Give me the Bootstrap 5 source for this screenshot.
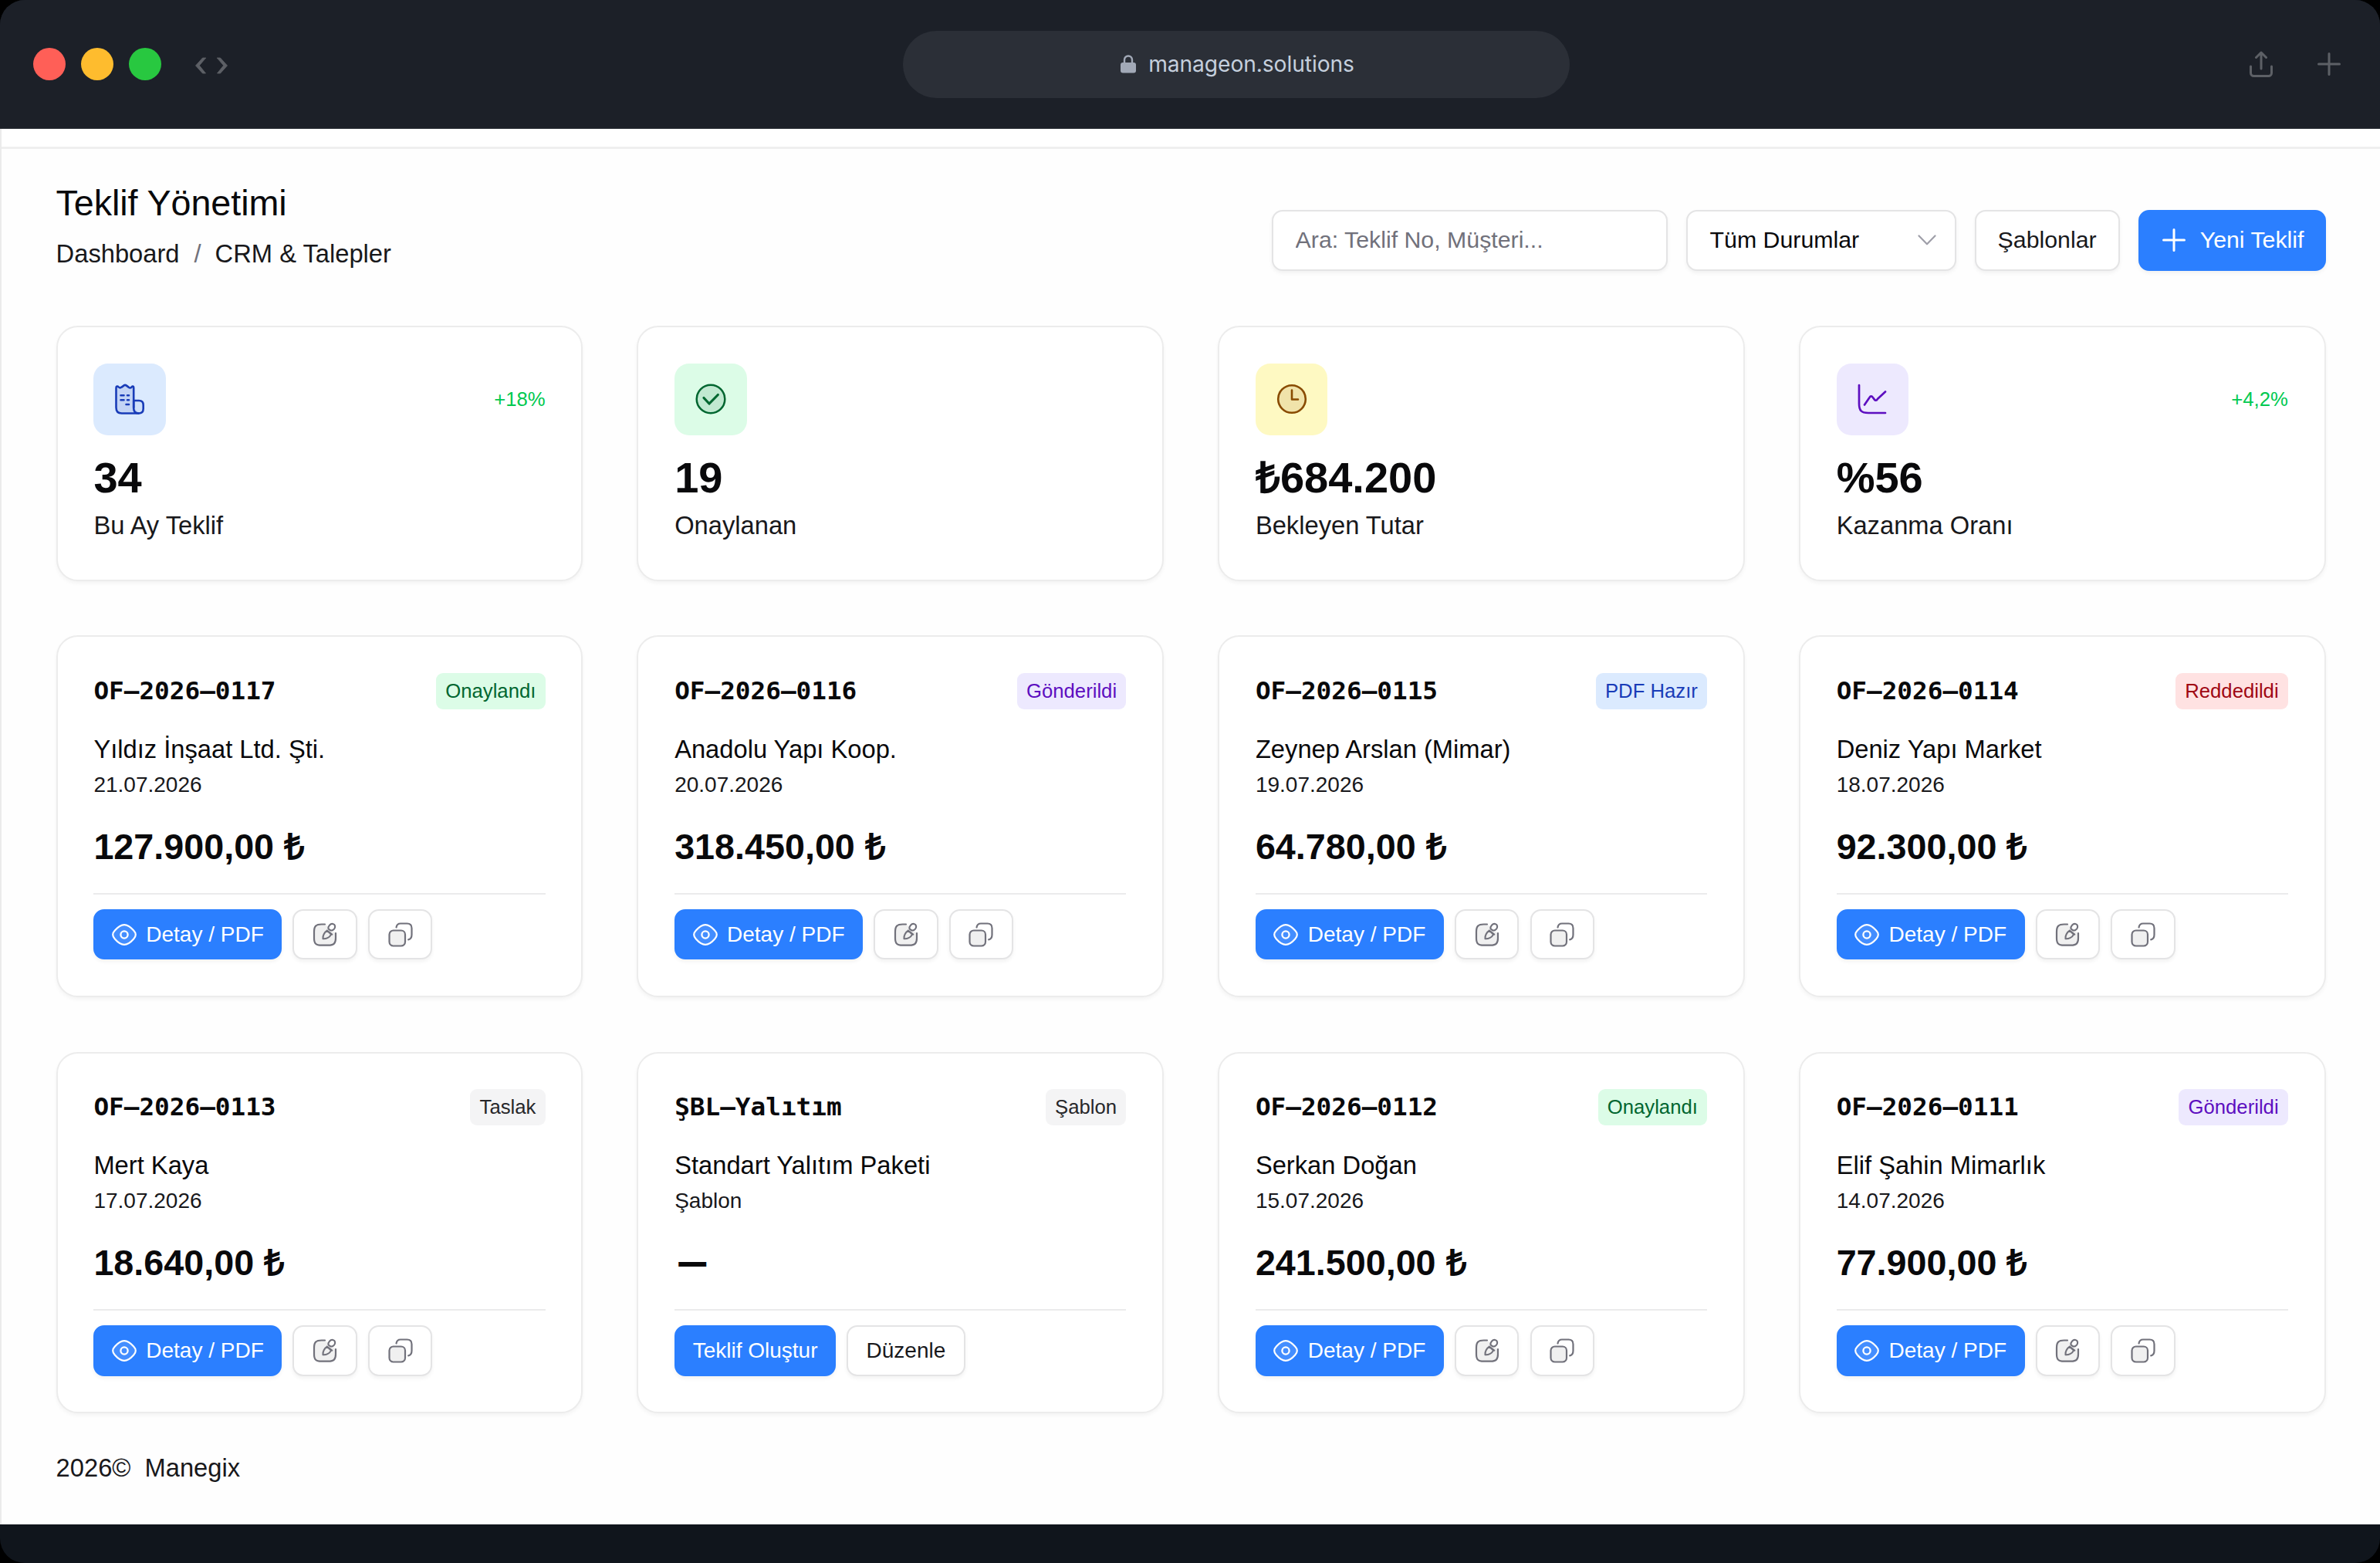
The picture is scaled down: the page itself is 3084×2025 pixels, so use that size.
<!DOCTYPE html>
<html lang="tr">
<head>
<meta charset="utf-8">
<title>Teklif Yönetimi</title>
<link href="https://cdn.jsdelivr.net/npm/bootstrap@5.3.0/dist/css/bootstrap.min.css" rel="stylesheet">
<style>
html{background:#000}
body{background:#000;font-family:"Liberation Sans",Arial,sans-serif;color:#18181b;font-size:32.7px;line-height:46px;margin:0;-webkit-font-smoothing:antialiased}
svg{fill:none;stroke:currentColor;stroke-linecap:round;stroke-linejoin:round;flex:none;display:block}
.window{height:2025px;border-radius:32px;overflow:hidden;background:#10151c}
.chrome{height:167px;background:#1c2028;border-bottom:1px solid #30343b;padding:0 51px 0 43px;color:#5d6066}
.side{width:1127px}
.dot{width:42px;height:42px;border-radius:50%}
.addr{width:864px;height:87px;border-radius:44px;background:#2b2f37;color:#c5cfdd;font:28.2px/40px Inter,sans-serif;letter-spacing:-.08px;padding-left:3px}
.page{height:1808px;background:#fefefe;border-left:2px solid #ebebeb}
.strip{height:26px;background:#fff;border-bottom:3px solid #efefef}
.content{padding:42px 70.4px 0 70.6px}
.title{font-size:46.7px;line-height:56px;color:#09090b;margin:0 0 15px;font-weight:400;letter-spacing:-.08px}
.crumb{--bs-breadcrumb-divider-color:#71717b;margin:0;font-size:32.7px}
.crumb .breadcrumb-item+.breadcrumb-item{padding-left:19px}
.crumb .breadcrumb-item+.breadcrumb-item::before{padding-right:18px}
.tools{gap:24px;margin-bottom:1px}
.ctl{height:79px;border:2.4px solid #e4e4e5;border-radius:14px;background:#fff;font-size:30.3px;line-height:40px;color:#09090b;box-shadow:0 3px 5px rgba(0,0,0,.05);padding:0 29px 1px;white-space:nowrap}
.ctl::placeholder{color:#71717b;opacity:1}
.ctl.search{width:513px}
.ctl.pick{width:350px;padding-right:24px}
.ctl.tpl{width:188px;padding:0 0 1px;color:#18181b}
.ctl.new{width:243px;background:#2b7fff;border-color:#2b7fff;color:#fff;padding:0 0 1px 3px}
.tiles{--bs-gutter-x:70px;--bs-gutter-y:70.5px;margin-top:-70.5px}
.tile{border:2.4px solid #ececec;border-radius:28px;box-shadow:0 3px 5px rgba(0,0,0,.045);background:#fff;padding:46.8px}
.ico{width:93.4px;height:93.4px;border-radius:19px}
.c-blue{background:#dbeafe;color:#193cb8}
.c-green{background:#dcfce7;color:#016630}
.c-yellow{background:#fef9c2;color:#894b00}
.c-violet{background:#ede9fe;color:#5d0ec0}
.c-red{background:#ffe2e2;color:#9f0712}
.c-gray{background:#f4f4f5;color:#27272a}
.delta{font-size:25.7px;color:#00c950;line-height:36px}
.value{font-size:56px;line-height:60px;font-weight:700;color:#09090b;margin:25.5px 0 8.6px}
.code{font:700 32.7px/46.7px "DejaVu Sans Mono",monospace;color:#09090b}
.dash{display:inline-block;transform:translateY(-2px) scale(.77,1.25)}
.tag{height:46.7px;line-height:46.7px;padding:0 12.2px;border-radius:9px;font-size:25.7px}
.who{margin-top:28.9px;color:#09090b}
.when{font-size:28px;line-height:40px;margin-top:3px}
.sum{font-size:46.7px;line-height:56px;font-weight:700;color:#09090b;margin-top:32px}
.acts{margin-top:32.2px;border-top:2.4px solid #ebebec;padding-top:19px;gap:14.2px}
.act{height:65.4px;border:2.4px solid #e4e4e5;border-radius:14px;background:#fff;color:#18181b;box-shadow:0 3px 5px rgba(0,0,0,.05);font-size:28px;line-height:40px;padding:0 21.5px}
.act svg+span{margin-left:12.4px}
.act.txt{padding:0 23.4px}
.act.go{background:#2b7fff;border-color:#2b7fff;color:#fff}
.act.sq{width:83.4px;padding:0;color:#71717b}
.foot{margin-top:48px;word-spacing:9px}
</style>
<script src="https://cdn.jsdelivr.net/npm/bootstrap@5.3.0/dist/js/bootstrap.bundle.min.js"></script>
</head>
<body>
<svg width="0" height="0" class="position-absolute">
<symbol id="eye" viewBox="0 0 32 32"><path d="M1.200 16c0-2.200.9-3.600 2.600-5.400C6.800 7.200 10.600 3.200 16 3.200s9.200 4 12.200 7.400c1.700 1.800 2.600 3.200 2.600 5.400s-.9 3.600-2.600 5.400c-3 3.400-6.800 7.400-12.200 7.400s-9.200-4-12.200-7.400C2.100 19.600 1.200 18.200 1.200 16z" fill="#fff" fill-opacity=".12" stroke-width="2.200"/><circle cx="16" cy="16" r="4.600" stroke-width="2.300"/></symbol>
<symbol id="edit" viewBox="0 0 32 32"><path d="M16 2.500h-4.500C4.500 2.500 2 5 2 12v8.500c0 7 2.500 9.200 9.500 9.200h9c7 0 9.500-2.500 9.500-9.200V14" fill="#000" fill-opacity=".06" stroke-width="2.200"/><path d="M18.800 10.700c-3.200 2-6 6.800-5.300 10.500 3.800.5 8.600-1.400 10.600-5.600zM18.800 10.700l6.500 5M20.500 8.300c-.7-3 2.600-7.200 6-6.300 3.200.7 3.300 4.400 1.500 6.600-1.600 1.800-4 2.200-5.600 1.200-.9-.4-1.600-.9-1.900-1.500z" stroke-width="2.100"/></symbol>
<symbol id="copy" viewBox="0 0 32 32"><rect x="1.500" y="10.500" width="20.500" height="20" rx="5.200" fill="#000" fill-opacity=".06" stroke-width="2.200"/><path d="M10.500 6.500c.6-3.500 2.200-5 5.500-5h8.500c4 0 6 2 6 6V16c0 3.600-1.400 5.700-4.300 6.300" stroke-width="2.200"/></symbol>
</svg>
<div class="window d-flex flex-column">
  <header class="chrome d-flex align-items-center">
    <div class="side d-flex align-items-center" style="gap:20px">
      <span class="dot" style="background:#ff5f57"></span><span class="dot" style="background:#febc2e"></span><span class="dot" style="background:#28c840"></span>
      <svg width="42" height="22" viewBox="0 0 42 22" class="ms-4 mt-1"><path d="M13.500 1H9.500L0.500 11l9 10h4L5.500 11zM28.500 1h4l9 10-9 10h-4L36.500 11z" fill="#5d6066" stroke="#5d6066" stroke-width=".8"/></svg>
    </div>
    <div class="addr d-flex align-items-center justify-content-center">
      <svg width="20" height="24" viewBox="0 0 20 24" style="margin-right:16px" color="#a2a9b7"><rect y="10" width="20" height="13.500" rx="3" fill="#a2a9b7" stroke="none"/><path d="M5 11V6.500a5 5 0 0 1 10 0V11" stroke-width="2.400"/></svg>
      <span>manageon.solutions</span>
    </div>
    <div class="flex-grow-1 d-flex align-items-center justify-content-end" style="gap:58px">
      <svg width="30" height="34" viewBox="0 0 30 34" stroke-width="3"><path d="M15 23V2M8.500 8.500 15 2l6.500 6.500M1.500 20v8.500a4 4 0 0 0 4 4h19a4 4 0 0 0 4-4V20"/></svg>
      <svg width="30" height="30" viewBox="0 0 30 30" stroke-width="3"><path d="M15 1.500v27M1.500 15h27"/></svg>
    </div>
  </header>
  <main class="page">
    <div class="strip"></div>
    <div class="content">
      <div class="d-flex justify-content-between align-items-end" style="margin-bottom:69.800px">
        <div>
          <h1 class="title">Teklif Yönetimi</h1>
          <ol class="breadcrumb crumb"><li class="breadcrumb-item">Dashboard</li><li class="breadcrumb-item">CRM &amp; Talepler</li></ol>
        </div>
        <div class="tools d-flex">
          <input class="ctl search" placeholder="Ara: Teklif No, Müşteri...">
          <div class="ctl pick d-flex align-items-center justify-content-between">Tüm Durumlar<svg width="24" height="14" viewBox="0 0 24 14" color="#9f9fa9" stroke-width="2.200"><path d="M1.500 1.500 12 12.300 22.500 1.500"/></svg></div>
          <button class="ctl tpl">Şablonlar</button>
          <button class="ctl new d-flex align-items-center justify-content-center"><svg width="30" height="30" viewBox="0 0 30 30" stroke-width="3" style="margin-right:19px"><path d="M15 1.500v27M1.500 15h27"/></svg>Yeni Teklif</button>
        </div>
      </div>
      <div class="row row-cols-4 tiles">
        <div class="col"><div class="tile">
          <div class="d-flex justify-content-between align-items-center"><div class="ico c-blue d-flex align-items-center justify-content-center"><svg width="38" height="40" viewBox="0 0 38 40" stroke-width="2.600"><path d="M24.200 31V5.200c0-2-1.500-2.200-2.500-.9-1.500 1.600-2.900 1.500-4.100.3L15 2.600c-1.300-1-2.500-1-3.700 0L8.600 4.600C7.200 5.700 6 5.700 4.600 4.300 3.300 2.900 1.500 3.300 1.500 5.500V31c0 5 2.200 7.500 7.200 7.500h22" fill="#193cb8" fill-opacity=".12"/><path d="M24.200 22h6.800c4 0 5.700 1.700 5.700 5.700v4.800c0 4-2 6-6 6-4.500 0-6.500-2-6.500-6.500z" fill="#193cb8" fill-opacity=".06"/><path d="M7.500 15.300h4M16 15.300h2M7.500 21.200h4M16 21.200h2M14.500 27h3.500" stroke-width="2.600"/></svg></div><span class="delta">+18%</span></div>
          <div class="value">34</div><div>Bu Ay Teklif</div></div></div>
        <div class="col"><div class="tile">
          <div class="d-flex"><div class="ico c-green d-flex align-items-center justify-content-center"><svg width="40" height="40" viewBox="0 0 40 40" stroke-width="2.500"><circle cx="20" cy="20" r="18.300" fill="#016630" fill-opacity=".12"/><path d="m11 18.500 7 7.500L29.300 14.500" stroke-width="3.200"/></svg></div></div>
          <div class="value">19</div><div>Onaylanan</div></div></div>
        <div class="col"><div class="tile">
          <div class="d-flex"><div class="ico c-yellow d-flex align-items-center justify-content-center"><svg width="40" height="40" viewBox="0 0 40 40" stroke-width="2.600"><circle cx="20" cy="20" r="17.800" fill="#894b00" fill-opacity=".12"/><path d="M20 8.500V20.500h8"/></svg></div></div>
          <div class="value">₺684.200</div><div>Bekleyen Tutar</div></div></div>
        <div class="col"><div class="tile">
          <div class="d-flex justify-content-between align-items-center"><div class="ico c-violet d-flex align-items-center justify-content-center"><svg width="38" height="40" viewBox="0 0 38 40" stroke-width="2.700"><path d="M2 2v24c0 9 3 12 12 12h22M9 27.500 15.500 18c1.300-2 3-2 4.200-.3l2 2.700c1.300 1.900 3 1.700 4.100-.3L36 10.500"/></svg></div><span class="delta">+4,2%</span></div>
          <div class="value">%56</div><div>Kazanma Oranı</div></div></div>

        <div class="col"><div class="tile">
          <div class="d-flex justify-content-between"><span class="code">OF–2026–0117</span><span class="tag c-green">Onaylandı</span></div>
          <div class="who">Yıldız İnşaat Ltd. Şti.</div><div class="when">21.07.2026</div><div class="sum">127.900,00 ₺</div>
          <div class="acts d-flex"><button class="act go d-flex align-items-center"><svg width="32" height="32"><use href="#eye"/></svg><span>Detay / PDF</span></button><button class="act sq d-flex align-items-center justify-content-center"><svg width="32" height="32"><use href="#edit"/></svg></button><button class="act sq d-flex align-items-center justify-content-center"><svg width="32" height="32"><use href="#copy"/></svg></button></div></div></div>
        <div class="col"><div class="tile">
          <div class="d-flex justify-content-between"><span class="code">OF–2026–0116</span><span class="tag c-violet">Gönderildi</span></div>
          <div class="who">Anadolu Yapı Koop.</div><div class="when">20.07.2026</div><div class="sum">318.450,00 ₺</div>
          <div class="acts d-flex"><button class="act go d-flex align-items-center"><svg width="32" height="32"><use href="#eye"/></svg><span>Detay / PDF</span></button><button class="act sq d-flex align-items-center justify-content-center"><svg width="32" height="32"><use href="#edit"/></svg></button><button class="act sq d-flex align-items-center justify-content-center"><svg width="32" height="32"><use href="#copy"/></svg></button></div></div></div>
        <div class="col"><div class="tile">
          <div class="d-flex justify-content-between"><span class="code">OF–2026–0115</span><span class="tag c-blue">PDF Hazır</span></div>
          <div class="who">Zeynep Arslan (Mimar)</div><div class="when">19.07.2026</div><div class="sum">64.780,00 ₺</div>
          <div class="acts d-flex"><button class="act go d-flex align-items-center"><svg width="32" height="32"><use href="#eye"/></svg><span>Detay / PDF</span></button><button class="act sq d-flex align-items-center justify-content-center"><svg width="32" height="32"><use href="#edit"/></svg></button><button class="act sq d-flex align-items-center justify-content-center"><svg width="32" height="32"><use href="#copy"/></svg></button></div></div></div>
        <div class="col"><div class="tile">
          <div class="d-flex justify-content-between"><span class="code">OF–2026–0114</span><span class="tag c-red">Reddedildi</span></div>
          <div class="who">Deniz Yapı Market</div><div class="when">18.07.2026</div><div class="sum">92.300,00 ₺</div>
          <div class="acts d-flex"><button class="act go d-flex align-items-center"><svg width="32" height="32"><use href="#eye"/></svg><span>Detay / PDF</span></button><button class="act sq d-flex align-items-center justify-content-center"><svg width="32" height="32"><use href="#edit"/></svg></button><button class="act sq d-flex align-items-center justify-content-center"><svg width="32" height="32"><use href="#copy"/></svg></button></div></div></div>

        <div class="col"><div class="tile">
          <div class="d-flex justify-content-between"><span class="code">OF–2026–0113</span><span class="tag c-gray">Taslak</span></div>
          <div class="who">Mert Kaya</div><div class="when">17.07.2026</div><div class="sum">18.640,00 ₺</div>
          <div class="acts d-flex"><button class="act go d-flex align-items-center"><svg width="32" height="32"><use href="#eye"/></svg><span>Detay / PDF</span></button><button class="act sq d-flex align-items-center justify-content-center"><svg width="32" height="32"><use href="#edit"/></svg></button><button class="act sq d-flex align-items-center justify-content-center"><svg width="32" height="32"><use href="#copy"/></svg></button></div></div></div>
        <div class="col"><div class="tile">
          <div class="d-flex justify-content-between"><span class="code">ŞBL–Yalıtım</span><span class="tag c-gray">Şablon</span></div>
          <div class="who">Standart Yalıtım Paketi</div><div class="when">Şablon</div><div class="sum"><span class="dash">—</span></div>
          <div class="acts d-flex"><button class="act go">Teklif Oluştur</button><button class="act txt">Düzenle</button></div></div></div>
        <div class="col"><div class="tile">
          <div class="d-flex justify-content-between"><span class="code">OF–2026–0112</span><span class="tag c-green">Onaylandı</span></div>
          <div class="who">Serkan Doğan</div><div class="when">15.07.2026</div><div class="sum">241.500,00 ₺</div>
          <div class="acts d-flex"><button class="act go d-flex align-items-center"><svg width="32" height="32"><use href="#eye"/></svg><span>Detay / PDF</span></button><button class="act sq d-flex align-items-center justify-content-center"><svg width="32" height="32"><use href="#edit"/></svg></button><button class="act sq d-flex align-items-center justify-content-center"><svg width="32" height="32"><use href="#copy"/></svg></button></div></div></div>
        <div class="col"><div class="tile">
          <div class="d-flex justify-content-between"><span class="code">OF–2026–0111</span><span class="tag c-violet">Gönderildi</span></div>
          <div class="who">Elif Şahin Mimarlık</div><div class="when">14.07.2026</div><div class="sum">77.900,00 ₺</div>
          <div class="acts d-flex"><button class="act go d-flex align-items-center"><svg width="32" height="32"><use href="#eye"/></svg><span>Detay / PDF</span></button><button class="act sq d-flex align-items-center justify-content-center"><svg width="32" height="32"><use href="#edit"/></svg></button><button class="act sq d-flex align-items-center justify-content-center"><svg width="32" height="32"><use href="#copy"/></svg></button></div></div></div>
      </div>
      <footer class="foot">2026© Manegix</footer>
    </div>
  </main>
</div>
</body>
</html>
